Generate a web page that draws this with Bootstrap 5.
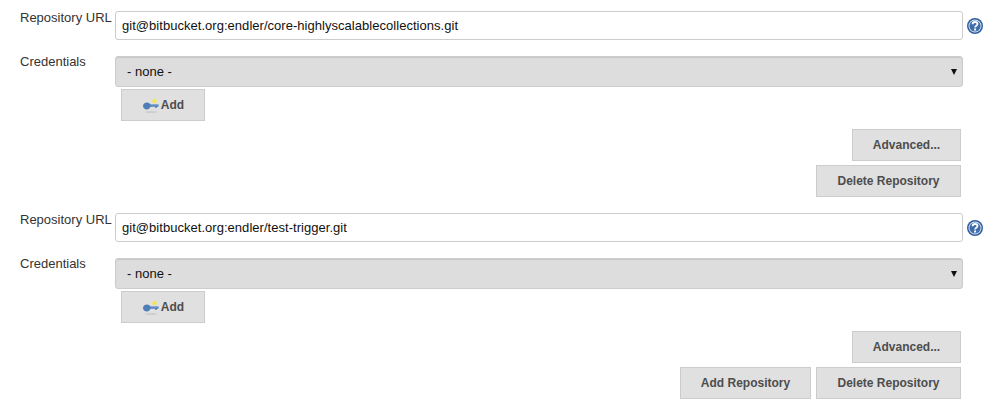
<!DOCTYPE html>
<html lang="en">
<head>
<meta charset="utf-8">
<title>Repositories</title>
<link href="https://cdn.jsdelivr.net/npm/bootstrap@5.3.0/dist/css/bootstrap.min.css" rel="stylesheet">
<style>
html,body{height:408px;overflow:hidden}
body{background:#fff;font-family:"Liberation Sans",Arial,sans-serif;font-size:13px;color:#333;padding-top:11px}
.repo-block{margin-bottom:16px}
.repo-row{display:flex;align-items:flex-start}
.repo-label{width:115px;padding-left:20px;font-size:13px;line-height:13px;color:#333;white-space:nowrap;flex:none}
.repo-cred .repo-label{line-height:11px}
.repo-field{width:848px;flex:none}
.repo-input.form-control{height:29px;padding:0 6px;font-size:13px;letter-spacing:.034px;line-height:27px;color:#111;border:1px solid #ccc;border-radius:3px;box-shadow:none}
.repo-select{height:31px;padding:0 11px;background:#ddd;border:1px solid #ccc;border-radius:3px;font-size:13px;color:#111;display:flex;align-items:center;justify-content:space-between;box-shadow:inset 0 1px 1px #c8c8c8}
.repo-caret{width:0;height:0;border-left:3.5px solid transparent;border-right:3.5px solid transparent;border-top:6px solid #111;margin-right:-6px}
.repo-help{margin-left:4px;margin-top:7px;flex:none;display:block}
.repo-btn.btn{height:32px;background:#e0e0e0;border:1px solid #ccc;border-radius:0;color:#4d4d4d;font-size:12px;font-weight:700;line-height:30px;padding:0;display:flex;align-items:center;justify-content:center}
.repo-btn.btn:hover{background:#e0e0e0;color:#4d4d4d}
.btn-add{width:84px;margin:2px 0 0 6px;gap:1px}
.btn-adv{width:109px}
.btn-del{width:145px}
.btn-addrepo{width:131px}
.repo-cred{margin-top:16px}
.repo-actions{width:961px;margin-top:8px}
.repo-actions-row{margin-top:4px;gap:5px}
</style>
</head>
<body>
<section class="repo-block">
  <div class="repo-row">
    <label class="repo-label">Repository URL</label>
    <div class="repo-field"><input class="form-control repo-input" value="git@bitbucket.org:endler/core-highlyscalablecollections.git"></div>
    <svg class="repo-help" width="16" height="16" viewBox="0 0 16 16"><circle cx="8" cy="8" r="8" fill="#2f5f9f"/><circle cx="8" cy="8" r="6.500" fill="#dfe8f3"/><circle cx="8" cy="8" r="5.600" fill="#3f6dab"/><path d="M5.600 6.200C5.600 4.800 6.700 4 8 4S10.500 4.900 10.500 6.100C10.500 7.800 8.100 7.800 8.100 9.500" fill="none" stroke="#fff" stroke-width="1.800"/><rect x="7.100" y="10.500" width="2" height="2" fill="#fff"/></svg>
  </div>
  <div class="repo-row repo-cred">
    <label class="repo-label">Credentials</label>
    <div class="repo-field">
      <div class="repo-select"><span>- none -</span><span class="repo-caret"></span></div>
      <button type="button" class="btn repo-btn btn-add"><svg width="18" height="16" viewBox="0 0 18 16"><ellipse cx="9" cy="15" rx="6" ry="1" fill="#cdcdcd"/><path d="M5 5.500C6.800 5.500 8 6.500 8.500 7.500H16.500V9.800H15V10.800H13V9.800H8.500C8 11 6.800 12.500 5 12.500C2.800 12.500 1 11 1 9S2.800 5.500 5 5.500z" fill="#4f7db8"/><rect x="9" y="7.500" width="7.500" height="1" fill="#7ea4d0"/><circle cx="12.500" cy="4" r="2.200" fill="#f3e64f"/></svg><span>Add</span></button>
    </div>
  </div>
  <div class="repo-actions d-flex justify-content-end"><button type="button" class="btn repo-btn btn-adv">Advanced...</button></div>
  <div class="repo-actions repo-actions-row d-flex justify-content-end"><button type="button" class="btn repo-btn btn-del">Delete Repository</button></div>
</section>
<section class="repo-block">
  <div class="repo-row">
    <label class="repo-label">Repository URL</label>
    <div class="repo-field"><input class="form-control repo-input" value="git@bitbucket.org:endler/test-trigger.git"></div>
    <svg class="repo-help" width="16" height="16" viewBox="0 0 16 16"><circle cx="8" cy="8" r="8" fill="#2f5f9f"/><circle cx="8" cy="8" r="6.500" fill="#dfe8f3"/><circle cx="8" cy="8" r="5.600" fill="#3f6dab"/><path d="M5.600 6.200C5.600 4.800 6.700 4 8 4S10.500 4.900 10.500 6.100C10.500 7.800 8.100 7.800 8.100 9.500" fill="none" stroke="#fff" stroke-width="1.800"/><rect x="7.100" y="10.500" width="2" height="2" fill="#fff"/></svg>
  </div>
  <div class="repo-row repo-cred">
    <label class="repo-label">Credentials</label>
    <div class="repo-field">
      <div class="repo-select"><span>- none -</span><span class="repo-caret"></span></div>
      <button type="button" class="btn repo-btn btn-add"><svg width="18" height="16" viewBox="0 0 18 16"><ellipse cx="9" cy="15" rx="6" ry="1" fill="#cdcdcd"/><path d="M5 5.500C6.800 5.500 8 6.500 8.500 7.500H16.500V9.800H15V10.800H13V9.800H8.500C8 11 6.800 12.500 5 12.500C2.800 12.500 1 11 1 9S2.800 5.500 5 5.500z" fill="#4f7db8"/><rect x="9" y="7.500" width="7.500" height="1" fill="#7ea4d0"/><circle cx="12.500" cy="4" r="2.200" fill="#f3e64f"/></svg><span>Add</span></button>
    </div>
  </div>
  <div class="repo-actions d-flex justify-content-end"><button type="button" class="btn repo-btn btn-adv">Advanced...</button></div>
  <div class="repo-actions repo-actions-row d-flex justify-content-end"><button type="button" class="btn repo-btn btn-addrepo">Add Repository</button><button type="button" class="btn repo-btn btn-del">Delete Repository</button></div>
</section>
<script src="https://cdn.jsdelivr.net/npm/bootstrap@5.3.0/dist/js/bootstrap.bundle.min.js"></script>
</body>
</html>
